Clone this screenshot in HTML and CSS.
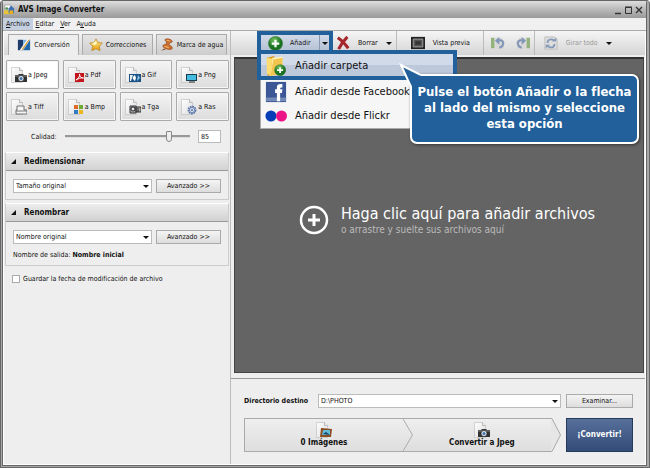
FILE: index.html
```html
<!DOCTYPE html>
<html lang="es">
<head>
  <meta charset="UTF-8">
  <title>AVS Image Converter</title>
  <link rel="stylesheet" href="styles.css">
</head>
<body>
  <!-- shared page outline used by all the file format icons -->
  <svg class="defs" aria-hidden="true">
    <defs>
      <linearGradient id="paper" x2="1" y2="1"><stop stop-color="#fff"/><stop offset="1" stop-color="#ddd"/></linearGradient>
      <radialGradient id="green" cx=".4" cy=".25"><stop stop-color="#72c35f"/><stop offset="1" stop-color="#19721f"/></radialGradient>
      <linearGradient id="gold" x2="0" y2="1"><stop stop-color="#fff39a"/><stop offset="1" stop-color="#e79a0c"/></linearGradient>
      <symbol id="page" viewBox="0 0 16 16"><path d="M.5.5h8l3 3v12H.5z" fill="url(#paper)" stroke="#bbb" stroke-width=".6"/><path d="M8.500.5v3h3" fill="#eee" stroke="#999" stroke-width=".6"/></symbol>
      <symbol id="camera" viewBox="0 0 16 16"><path d="M4 8h3l1-1h4l1 1h3v7H4z" fill="#333"/><path d="M4 9h12" stroke="#888"/><circle cx="10" cy="11.500" r="3" fill="#dde6f0" stroke="#111" stroke-width=".6"/><circle cx="10" cy="11.500" r="1.500" fill="#4472a8"/></symbol>
      <symbol id="plus" viewBox="0 0 16 16"><circle cx="8" cy="8" r="7.500" fill="url(#green)" stroke="#2c6e2c" stroke-width=".6"/><path d="M8 4v8M4 8h8" stroke="#fff" stroke-width="2.400"/></symbol>
      <symbol id="gear" viewBox="0 0 16 16"><circle cx="11" cy="11" r="3.600" fill="#cbd5ea" stroke="#5670a5" stroke-width="1.600" stroke-dasharray="1.600 .8"/><circle cx="11" cy="11" r="2.600" fill="#dde5f3" stroke="#5670a5" stroke-width=".8"/><circle cx="11" cy="11" r="1" fill="#5670a5"/></symbol>
      <symbol id="rotate" viewBox="0 0 16 16"><path d="M0 2h4v12H0z" fill="#94b27b"/><path d="M5 2h7l3 4v9H5z" fill="#d8d8d8"/><path d="M8.500 5c4-1 6.500 2 5 5-.5 2-2 3-4 3" fill="none" stroke="#8296b8" stroke-width="2.400"/><path d="M4.500 5.500L9.500 1v9z" fill="#8296b8"/></symbol>
    </defs>
  </svg>

  <div class="window">
    <header class="titlebar">
      <svg class="app-icon" viewBox="0 0 12 12"><path d="M1 1h6v6H1z" fill="#f8f8f8" stroke="#888" stroke-width=".6"/><path d="M0 7h6v4H0z" fill="#edc332"/><path d="M5 5l3-3 3 3v5H5z" fill="#3f70b5"/><path d="M6 7h4v4H6z" fill="#e4b020"/><circle cx="3" cy="5" r="1.500" fill="#4c9646"/></svg>
      <h1>AVS Image Converter</h1>
      <svg class="window-controls" viewBox="0 0 30 10"><path d="M1 8.500h6" stroke="#333" stroke-width="1.500"/><path d="M11.500 2.500h6v6h-6zM11 2h7" fill="none" stroke="#333"/><path d="M22 2l6 6M28 2l-6 6" stroke="#333" stroke-width="1.400"/></svg>
    </header>

    <nav class="menubar">
      <button class="active"><u>A</u>rchivo</button>
      <button><u>E</u>ditar</button>
      <button><u>V</u>er</button>
      <button>A<u>y</u>uda</button>
    </nav>

    <div class="workspace">
      <aside class="sidebar">
        <div class="tabs">
          <button class="tab selected">
            <svg viewBox="0 0 16 16"><path d="M1 2h14v12H1z" fill="#fff"/><path d="M1 2h6v12H1z" fill="#1d3c6c"/><path d="M7 2h8L7 14z" fill="#7db5e5"/><path d="M15 2v12H7z" fill="#2167aa"/><path d="M12 1h3L6 14H3z" fill="#fff"/><path d="M15 1L7 13H5L13 2z" fill="#e2a03a"/></svg>
            Conversión
          </button>
          <button class="tab">
            <svg viewBox="0 0 16 16"><path d="M8 1l2.200 4.200 5 .5-3.500 3.700 1 5L8 12.200l-4.800 2.200 1-5L.8 5.800l5-.6z" fill="url(#gold)" stroke="#b77c12" stroke-width=".8"/><path d="M8 3l1 3-2 2-4-1z" fill="#fff9c4"/></svg>
            Correcciones
          </button>
          <button class="tab">
            <svg viewBox="0 0 16 16"><path d="M6 1.500c3-1.500 8 .5 8 2.500 0 1-1.500 1.500-3 1.200L10.500 8c2.500 1 4 2.500 3.500 4s-5 1.500-8 0-3.500-3-2-4 3-.8 3-.8L7.500 4.500C6 3.500 5 2.500 6 1.500z" fill="#c96e2c" stroke="#7e3913" stroke-width=".6"/><path d="M7.500 2.500l4 1M5 9.500l5 1.500" stroke="#f5ad6b" stroke-width="1.300"/><path d="M5 12l-4 2.500L6.500 13z" fill="#8b431a"/></svg>
            Marca de agua
          </button>
        </div>

        <div class="formats">
          <button class="format selected"><svg viewBox="0 0 16 16"><use href="#page"/><use href="#camera"/></svg>a Jpeg</button>
          <button class="format"><svg viewBox="0 0 16 16"><use href="#page"/><path d="M7 6h9v9H7z" fill="#c4151c"/><path d="M8 13c3-2 4-4 3.500-6 0 3 2 4 4 4-3-.5-5 .5-7.500 2" fill="none" stroke="#fff"/></svg>a Pdf</button>
          <button class="format"><svg viewBox="0 0 16 16"><use href="#page"/><path d="M4 7h12v8H4z" fill="#1c5387"/><path d="M5 8h3l-2 6H5z" fill="#eee"/><path d="M10 8c-3 2-3 4 0 6l1-3z" fill="#fff"/><path d="M13 8l2 3-3 3z" fill="#8ec9f0"/></svg>a Gif</button>
          <button class="format"><svg viewBox="0 0 16 16"><use href="#page"/><path d="M5 7h11v7H5z" fill="#173d50"/><path d="M6 8h9v5H6z" fill="#45bde1"/><path d="M8 15h6" stroke="#333"/></svg>a Png</button>
          <button class="format"><svg viewBox="0 0 16 16"><use href="#page"/><path d="M6 7h7v4h3v4H5v-4h1z" fill="#f5f5f5" stroke="#555" stroke-width=".8"/><path d="M5 12h11" stroke="#777"/></svg>a Tiff</button>
          <button class="format"><svg viewBox="0 0 16 16"><use href="#page"/><path d="M6 6h4v4H6z" fill="#de6a28"/><path d="M11 6h4v4h-4z" fill="#6caa32"/><path d="M6 11h4v4H6z" fill="#317dc4"/><path d="M11 11h4v4h-4z" fill="#edb51e"/></svg>a Bmp</button>
          <button class="format"><svg viewBox="0 0 16 16"><use href="#page"/><path d="M5 7h6v7H5zM11 8h5v5h-5z" fill="#aaa" stroke="#333"/><circle cx="8" cy="10" r="2" fill="#e8edf5" stroke="#222"/><path d="M13 9v4" stroke="#222"/></svg>a Tga</button>
          <button class="format"><svg viewBox="0 0 16 16"><use href="#page"/><use href="#gear"/></svg>a Ras</button>
        </div>

        <div class="quality">
          <label for="quality">Calidad:</label>
          <input type="range" id="quality" min="0" max="100" value="85">
          <input type="text" class="quality-value" aria-label="Calidad" value="85">
        </div>

        <section class="panel">
          <h2>Redimensionar</h2>
          <div class="panel-row">
            <div class="combo"><select aria-label="Redimensionar"><option>Tamaño original</option></select></div>
            <button class="btn">Avanzado &gt;&gt;</button>
          </div>
        </section>

        <section class="panel">
          <h2>Renombrar</h2>
          <div class="panel-row">
            <div class="combo"><select aria-label="Renombrar"><option>Nombre original</option></select></div>
            <button class="btn">Avanzado &gt;&gt;</button>
          </div>
          <p>Nombre de salida: <b>Nombre inicial</b></p>
        </section>

        <label class="keep-date"><input type="checkbox"> Guardar la fecha de modificación de archivo</label>
      </aside>

      <main class="content">
        <div class="toolbar">
          <div class="split">
            <button class="split-main"><svg viewBox="0 0 16 16"><use href="#plus"/></svg>Añadir</button>
            <button class="split-arrow" aria-label="Más opciones"><i class="caret"></i></button>

            <div class="dropdown">
              <button class="dropdown-item highlighted">
                <svg viewBox="0 0 24 24"><path d="M2 3l8-2 1 3 7-1v17L3 23z" fill="#d99b25"/><path d="M8 3l11-1v18L6 23z" fill="#fff4bb"/><path d="M9 5l10-2v17L6 23z" fill="#f1c54f"/><path d="M2 3l6 1-2 19-4-3z" fill="#ffdc70"/><use href="#plus" x="10" y="10" width="13" height="13"/></svg>
                <span>Añadir carpeta</span>
              </button>
              <div class="dropdown-rest">
                <button class="dropdown-item">
                  <svg viewBox="0 0 24 24"><path d="M1 1h22v22H1z" fill="#3b5795"/><path d="M1 18h22v4H1z" fill="#7389b6"/><path d="M13 22v-9h-2V9h2V7c0-3 2-4 6-3.500V7c-2 0-2.500 0-2.500 2H19l-.5 4h-2v9z" fill="#fff"/></svg>
                  <span>Añadir desde Facebook</span>
                </button>
                <button class="dropdown-item">
                  <svg viewBox="0 0 24 24"><circle cx="6.500" cy="12" r="6" fill="#073eb7"/><circle cx="18" cy="12" r="6" fill="#ec1389"/></svg>
                  <span>Añadir desde Flickr</span>
                </button>
              </div>
              <div class="callout">
                <svg viewBox="0 0 24 24"><path d="M13 24L2 2l20 9v13z" fill="#21609a"/><path d="M12 24L2 2l20 10" fill="none" stroke="#fff" stroke-width="2"/></svg>
                Pulse el botón Añadir o la flecha al lado del mismo y seleccione esta opción
              </div>
            </div>
          </div>
          <button class="tool delete"><svg viewBox="0 0 16 16"><path d="M2 2c5 3 9 8 12 12M13 1C9 5 6 9 3 15" fill="none" stroke="#a5262b" stroke-width="3.500"/></svg>Borrar<i class="caret"></i></button>
          <button class="tool preview"><svg viewBox="0 0 16 16"><path d="M0 1h16v14H0z" fill="#222"/><path d="M2.500 3.500h11v9h-11z" fill="#555" stroke="#aaa"/><path d="M5 6h6v4H5z" fill="#333"/></svg>Vista previa</button>
          <button class="tool rotate" aria-label="Girar a la izquierda"><svg viewBox="0 0 16 16"><use href="#rotate"/></svg></button>
          <button class="tool rotate right" aria-label="Girar a la derecha"><svg viewBox="0 0 16 16"><g transform="matrix(-1 0 0 1 16 0)"><use href="#rotate"/></g></svg></button>
          <button class="tool rotate-all"><svg viewBox="0 0 16 16"><path d="M1 1h11l3 3v11H1z" fill="#ddd" stroke="#bbb"/><path d="M4 8c0-5 6-5 8-2M12 9c0 5-6 5-8 2" fill="none" stroke="#8498b9" stroke-width="2"/><path d="M9 6h5V2zM2 10h5l-5 4z" fill="#8498b9"/></svg>Girar todo<i class="caret"></i></button>
        </div>

        <button class="dropzone">
          <svg viewBox="0 0 30 30"><circle cx="15" cy="15" r="13" fill="none" stroke="#fff" stroke-width="2.500"/><path d="M15 9v12M9 15h12" stroke="#fff" stroke-width="3"/></svg>
          <span class="drop-text">
            <span class="drop-title">Haga clic aquí para añadir archivos</span>
            <span class="drop-hint">o arrastre y suelte sus archivos aquí</span>
          </span>
        </button>

        <footer class="output">
          <label for="folder">Directorio destino</label>
          <div class="combo"><select id="folder"><option>D:\PHOTO</option></select></div>
          <button class="btn">Examinar...</button>
          <div class="steps">
            <div class="step source">
              <svg class="step-icon" viewBox="0 0 16 16"><use href="#page"/><path d="M5 6l11 1-1 8H4z" fill="#8d4c20"/><path d="M7 8h7v5H6z" fill="#63bad8"/><path d="M7 12l3-2 4 3" fill="#164266"/></svg>
              0 Imágenes
            </div>
            <svg class="chevron" viewBox="0 0 10 34" preserveAspectRatio="none"><path d="M0 0l9.500 17L0 34" fill="none" stroke="#aaa"/></svg>
            <div class="step">
              <svg class="step-icon" viewBox="0 0 16 16"><use href="#page"/><use href="#camera"/></svg>
              Convertir a Jpeg
            </div>
            <svg class="chevron tip" viewBox="0 0 10 34" preserveAspectRatio="none"><path d="M0 0h1l8.500 17L1 34H0z" fill="#e6e6e6"/><path d="M0 .5h1l8.500 16.500L1 33.500H0" fill="none" stroke="#aaa"/></svg>
          </div>
          <button class="convert">¡Convertir!</button>
        </footer>
      </main>
    </div>
  </div>
</body>
</html>
```
FILE: styles.css
```css
* {
  box-sizing: border-box;
}
body {
  margin: 0;
  font-family: "DejaVu Sans Condensed", "DejaVu Sans", sans-serif;
  font-size: 7px;
  line-height: 10px;
  color: #111;
}
button, input, select {
  font: inherit;
  color: inherit;
  margin: 0;
  padding: 0;
}
button {
  border: 0;
  background: none;
  white-space: nowrap;
}
h1, h2, p {
  margin: 0;
}
svg {
  display: block;
  flex: none;
}
.defs {
  position: absolute;
  width: 0;
  height: 0;
}
.window {
  display: flex;
  flex-direction: column;
  height: 100vh;
  background: #a8a8a8;
  border: double #666;
  border-width: 1px 4px 3px 3px;
  border-radius: 4px 4px 0 0;
}

/* title and menus */
.titlebar {
  display: flex;
  align-items: center;
  gap: 3px;
  height: 17px;
  padding: 0 2px 0 1px;
  background: linear-gradient(#dedede, #bcbcbc 45%, #999);
}
.titlebar h1 {
  flex: 1;
  font-size: 8px;
}
.app-icon {
  width: 11px;
  height: 11px;
}
.window-controls {
  width: 30px;
  height: 10px;
}
.menubar {
  display: flex;
  height: 13px;
  background: #f0f0f0;
  border-bottom: 1px solid #aaa;
}
.menubar button {
  padding: 0 3px;
}
.menubar .active {
  background: #c4cfdf;
}
.workspace {
  display: grid;
  grid-template-columns: 228px 1fr;
  flex: 1;
  min-height: 0;
  background: #eee;
  border-bottom: 1px solid #fff;
}

/* left side */
.sidebar {
  display: flex;
  flex-direction: column;
  border-right: 1px solid #bbb;
  border-left: 1px solid #fff;
}
.tabs {
  display: flex;
  gap: 3px;
  height: 24px;
  padding: 3px 3px 0 4px;
  background: linear-gradient(#f5f5f5, #d8d8d8);
}
.tab {
  display: flex;
  align-items: center;
  justify-content: center;
  gap: 3px;
  flex: 1;
  border: 1px solid #aaa;
  border-bottom-color: #ccc;
  background: linear-gradient(#e5e5e5, #cecece);
}
.tab.selected {
  background: #eee;
  border-bottom: 0;
}
.tab svg {
  width: 14px;
  height: 14px;
}
.formats {
  display: grid;
  grid-template-columns: repeat(4, 1fr);
  gap: 3px 4px;
  padding: 5px 1px 0 2px;
}
.format {
  display: flex;
  align-items: center;
  gap: 1px;
  height: 29px;
  padding-left: 4px;
  border: 1px solid #aaa;
  border-radius: 1px;
  background: linear-gradient(#f4f4f4, #dcdcdc);
  box-shadow: inset 0 0 0 1px #f5f5f5;
}
.format.selected {
  background: #fff;
}
.format svg {
  width: 16px;
  height: 16px;
}
.quality {
  display: flex;
  align-items: center;
  gap: 8px;
  padding: 9px 9px 9px 27px;
}
.quality input[type="range"] {
  flex: 1;
  min-width: 0;
  height: 12px;
  appearance: none;
  background: none;
}
.quality input::-webkit-slider-runnable-track {
  height: 3px;
  background: #999;
  border-bottom: 1px solid #ddd;
}
.quality input::-webkit-slider-thumb {
  appearance: none;
  width: 6px;
  height: 11px;
  margin-top: -4px;
  background: #eee;
  border: 1px solid #888;
  border-radius: 1px 1px 3px 3px;
}
.quality-value {
  width: 23px;
  height: 13px;
  padding-left: 2px;
  border: 1px solid #bbb;
  background: #fff;
}
.panel {
  margin: 0 1px 3px;
  border: 1px solid #ccc;
  border-top-color: #fff;
}
.panel h2 {
  display: flex;
  align-items: center;
  gap: 8px;
  height: 18px;
  padding-left: 5px;
  font-size: 8px;
  background: linear-gradient(#ececec, #d2d2d2);
  border-bottom: 1px solid #999;
}
.panel h2::before {
  content: "";
  border-left: 5px solid transparent;
  border-bottom: 5px solid #111;
}
.panel-row {
  display: flex;
  gap: 4px;
  padding: 8px 7px 6px;
}
.panel p {
  padding: 0 7px 5px;
}
.combo {
  position: relative;
  flex: 1;
  min-width: 0;
}
.combo select {
  display: block;
  width: 100%;
  height: 14px;
  padding-left: 2px;
  appearance: none;
  border: 1px solid #bbb;
  border-radius: 0;
  background: #fff;
}
.combo::after, .caret {
  content: "";
  border: solid transparent;
  border-width: 3px 3px 0;
  border-top-color: #111;
}
.combo::after {
  position: absolute;
  top: 6px;
  right: 3px;
}
.btn {
  width: 65px;
  height: 14px;
  border: 1px solid #aaa;
  background: linear-gradient(#f4f4f4, #ddd);
}
.keep-date {
  display: flex;
  align-items: center;
  gap: 3px;
  padding: 5px 8px;
}
.keep-date input {
  width: 8px;
  height: 8px;
  appearance: none;
  border: 1px solid #aaa;
  background: #fff;
}

/* right side */
.content {
  display: flex;
  flex-direction: column;
  min-width: 0;
  border-right: 1px solid #fff;
}
.toolbar {
  display: flex;
  align-items: stretch;
  height: 24px;
  padding-left: 26px;
  background: linear-gradient(#f5f5f5, #d5d5d5);
}
.split {
  position: relative;
  z-index: 1;
  display: flex;
  width: 76px;
  border: 4px solid #21609a;
  background: linear-gradient(#d0d9e7, #b4c1d4);
}
.split-main {
  display: flex;
  align-items: center;
  gap: 7px;
  flex: 1;
  padding-left: 7px;
}
.split-main svg {
  width: 15px;
  height: 15px;
}
.split-arrow {
  width: 10px;
  border-left: 1px solid #8798b0;
}
.caret {
  display: inline-block;
}
.tool {
  display: flex;
  align-items: center;
  gap: 8px;
}
.tool svg {
  width: 14px;
  height: 14px;
}
.delete {
  padding: 0 4px 0 3px;
  border-right: 1px solid #bbb;
}
.preview {
  padding: 0 13px 0 14px;
  border-right: 1px solid #bbb;
}
.rotate {
  padding: 0 4px 0 7px;
}
.rotate.right {
  border-right: 1px solid #bbb;
}
.rotate-all {
  padding-left: 9px;
  color: #999;
}
.dropdown {
  position: absolute;
  top: 15px;
  left: -4px;
  width: 200px;
  font-size: 11px;
  line-height: 16px;
}
.dropdown-item {
  display: flex;
  align-items: center;
  gap: 8px;
  width: 100%;
  height: 24px;
  padding-left: 4px;
}
.dropdown-item svg {
  width: 22px;
  height: 22px;
}
.dropdown-item.highlighted {
  height: 30px;
  padding-top: 2px;
  border: 4px solid #21609a;
  background: linear-gradient(#d1dae8 50%, #bdc9db 50%);
}
.dropdown-rest {
  margin-left: 3px;
  border: 1px solid #aaa;
  border-top: 0;
  background: #f6f6f6;
}
.callout {
  position: absolute;
  top: 24px;
  left: 153px;
  width: 229px;
  padding: 8px 4px 10px;
  border: 2px solid #fff;
  border-radius: 7px;
  background: #21609a;
  box-shadow: 1px 1px 3px #333;
  color: #fff;
  font-size: 13px;
  font-weight: bold;
  text-align: center;
}
.callout svg {
  position: absolute;
  top: -13px;
  left: -13px;
  width: 24px;
  height: 24px;
}
.dropzone {
  display: flex;
  align-items: center;
  justify-content: center;
  gap: 12px;
  flex: 1;
  margin: 2px 1px 0 3px;
  padding: 8px 0 0 16px;
  border: 1px solid #444;
  border-top: 2px solid #333;
  background: #646464;
  color: #fff;
  text-align: left;
}
.dropzone svg {
  width: 30px;
  height: 30px;
}
.drop-text, .drop-title, .drop-hint {
  display: block;
}
.drop-title {
  font-size: 16px;
  line-height: 20px;
}
.drop-hint {
  font-size: 10px;
  line-height: 12px;
  color: #bbb;
}
.output {
  display: grid;
  grid-template-columns: 69px 1fr 67px;
  align-items: center;
  gap: 10px 5px;
  margin-top: 5px;
  padding: 15px 12px 12px 13px;
  border-top: 1px solid #999;
}
.output label {
  font-weight: bold;
  white-space: nowrap;
}
.output .btn {
  width: auto;
}
.steps {
  display: flex;
  grid-column: 1 / 3;
  height: 34px;
  border-left: 1px solid #aaa;
}
.step {
  display: flex;
  flex-direction: column;
  align-items: center;
  justify-content: center;
  flex: 7;
  font-size: 8px;
  font-weight: bold;
  background: linear-gradient(#eee, #dedede);
  border: solid #aaa;
  border-width: 1px 0;
}
.step.source {
  flex: 8;
}
.step-icon {
  width: 16px;
  height: 16px;
}
.chevron {
  width: 10px;
  height: 34px;
  background: linear-gradient(#eee, #dedede);
  border: solid #aaa;
  border-width: 1px 0;
}
.chevron.tip {
  background: none;
  border: 0;
}
.convert {
  height: 34px;
  border: 1px solid #263a5b;
  background: linear-gradient(#566f9b, #344d78);
  color: #fff;
  font-size: 8px;
  font-weight: bold;
}
```
